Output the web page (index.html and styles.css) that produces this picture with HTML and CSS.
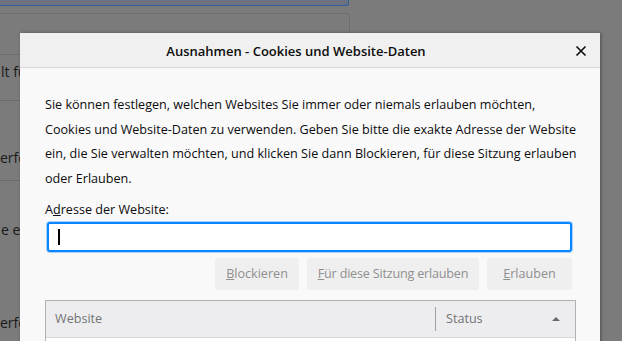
FILE: index.html
```html
<!DOCTYPE html>
<html lang="de">
<head>
  <meta charset="UTF-8">
  <title>Ausnahmen - Cookies und Website-Daten</title>
  <link rel="stylesheet" href="styles.css">
</head>
<body>
<div class="seite">
  <div class="suche"></div>
  <div class="kasten"></div>
  <div class="zeile z1">lt für</div>
  <div class="trenner"></div>
  <div class="zeile z2">erfolgt</div>
  <div class="trenner t2"></div>
  <div class="zeile z3">e einer</div>
  <div class="zeile z4">erfolgt</div>
</div>

<div class="dialog">
  <div class="kopf">
    <span class="titel">Ausnahmen - Cookies und Website-Daten</span>
    <span class="schliessen">
      <svg width="12" height="12" viewBox="0 0 12 12"><path d="M1.5 1.5 L10.5 10.5 M10.5 1.5 L1.5 10.5" stroke="#0c0c0d" stroke-width="1.6" fill="none"/></svg>
    </span>
  </div>
  <div class="inhalt">
    <p class="hinweis">Sie können festlegen, welchen Websites Sie immer oder niemals erlauben möchten,<br>Cookies und Website-Daten zu verwenden. Geben Sie bitte die exakte Adresse der Website<br>ein, die Sie verwalten möchten, und klicken Sie dann Blockieren, für diese Sitzung erlauben<br>oder Erlauben.</p>
    <label class="label">A<u>d</u>resse der Website:</label>
    <div class="eingabe"><span class="cursor"></span></div>
    <div class="knoepfe">
      <span class="knopf k1"><u>B</u>lockieren</span>
      <span class="knopf k2"><u>F</u>ür diese Sitzung erlauben</span>
      <span class="knopf k3"><u>E</u>rlauben</span>
    </div>
    <div class="liste">
      <div class="spalten">
        <span class="spalte website">Website</span>
        <span class="spalte status">Status</span>
        <span class="pfeil"></span>
      </div>
    </div>
  </div>
</div>
</body>
</html>
```

FILE: styles.css
```css
html, body {
  margin: 0;
  padding: 0;
  width: 622px;
  height: 341px;
  overflow: hidden;
  background: #7b7b7b;
  font-family: 'Open Sans', 'Noto Sans', sans-serif;
  color: #0c0c0d;
}
.seite {
  position: absolute;
  top: 0; left: 0;
  width: 622px;
  height: 341px;
}
.suche {
  height: 5px;
  width: 348px;
  background: #6c7280;
  border-bottom: 1px solid #2e5e9c;
  border-right: 1px solid #2e5e9c;
  border-bottom-right-radius: 3px;
}
.kasten {
  position: absolute;
  top: 13px; left: -4px;
  width: 352px;
  height: 40px;
  border: 1px solid #6e6e6e;
  border-radius: 3px;
}
.zeile {
  position: absolute;
  left: 1px;
  font-size: 14px;
  color: #1a1a1a;
  white-space: nowrap;
}
.z1 { top: 62px; }
.z2 { top: 148px; left: 0; }
.z3 { top: 220px; }
.z4 { top: 313px; left: 0; }
.trenner {
  position: absolute;
  top: 100px; left: 0;
  width: 20px;
  height: 1px;
  background: #6a6a6a;
}
.t2 { top: 180px; }

.dialog {
  position: absolute;
  top: 33px; left: 20px;
  width: 580px;
  height: 330px;
  background: #f9f9fa;
  box-shadow: 1px 0 3px rgba(0,0,0,0.35);
}
.kopf {
  height: 34px;
  background: #f0f0f0;
  border-bottom: 1px solid #d7d7db;
  display: flex;
  align-items: center;
  justify-content: center;
  padding-right: 28px;
  position: relative;
}
.titel {
  font-size: 13px;
  font-weight: 600;
  color: #0c0c0d;
  margin-top: 1px;
}
.schliessen {
  position: absolute;
  right: 13px;
  top: 12px;
  width: 12px;
  height: 12px;
  display: flex;
}
.inhalt {
  padding: 25px 25px 0 25px;
}
.hinweis {
  margin: 0;
  font-size: 12.6px;
  line-height: 24.7px;
  white-space: nowrap;
}
.label {
  display: block;
  margin-top: 10px;
  font-size: 12.6px;
  line-height: 16px;
}
.eingabe {
  margin: 4px 2px 0 2px;
  height: 26px;
  width: 521px;
  background: #fff;
  border: 2px solid #0a84ff;
  border-radius: 3px;
  box-shadow: 0 0 0 1px #a8d2ff;
  display: flex;
  align-items: center;
}
.cursor {
  display: block;
  width: 2px;
  height: 16px;
  background: #000;
  margin-left: 9px;
}
.knoepfe {
  display: flex;
  justify-content: flex-end;
  gap: 8px;
  margin-top: 6px;
  width: 527px;
}
.knopf {
  height: 32px;
  line-height: 32px;
  background: #efefef;
  border-radius: 2px;
  color: #8f8f90;
  font-size: 12.6px;
  text-align: center;
  white-space: nowrap;
}
.k1 { width: 84px; }
.k2 { width: 172px; letter-spacing: -0.2px; }
.k3 { width: 85px; }
.liste {
  margin-top: 10px;
  width: 529px;
  height: 60px;
  border: 1px solid #b1b1b3;
  background: #fff;
}
.spalten {
  height: 36px;
  background: #ededf0;
  border-bottom: 1px solid #d7d7db;
  display: flex;
  align-items: center;
  position: relative;
}
.spalte {
  font-size: 12.6px;
  color: #737373;
}
.website {
  width: 380px;
  padding-left: 9px;
}
.status {
  border-left: 1px solid #a0a0a0;
  padding-left: 10px;
  line-height: 24px;
}
.pfeil {
  position: absolute;
  right: 15px;
  top: 16px;
  width: 0; height: 0;
  border-left: 4px solid transparent;
  border-right: 4px solid transparent;
  border-bottom: 4px solid #6a6a6a;
}
```
